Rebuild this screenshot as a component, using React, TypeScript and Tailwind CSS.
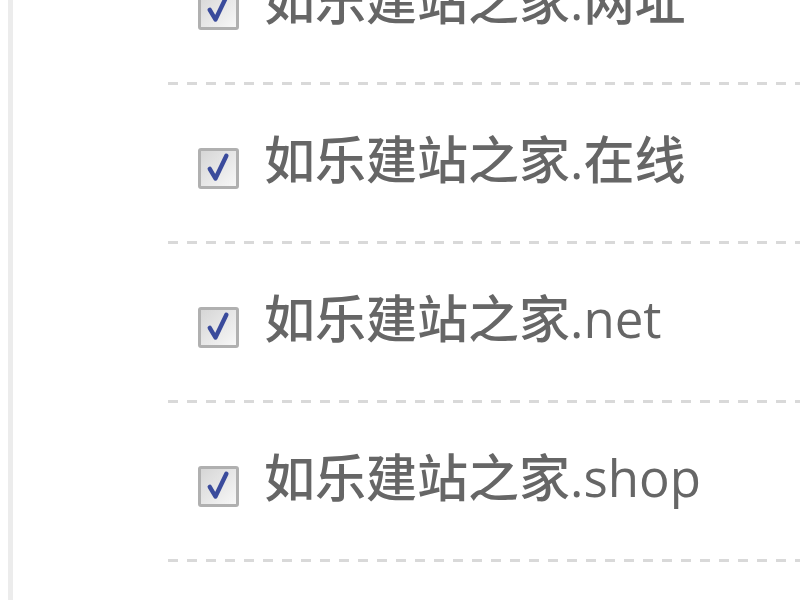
const domains = ['如乐建站之家.网址', '如乐建站之家.在线', '如乐建站之家.net', '如乐建站之家.shop']

const CheckMark = () => (
	<span className="mt-[10px] flex h-[41px] w-[41px] shrink-0 items-center justify-center rounded-[3px] border-[3px] border-[#b0b0b0] bg-[linear-gradient(135deg,#d6d6d6,#f7f7f7)]">
		<svg viewBox="0 0 40 40" className="h-[38px] w-[38px]">
			<path d="M10 21 L16.5 32 L29 6" fill="none" stroke="#3a4b9c" strokeWidth="5" strokeLinecap="round" strokeLinejoin="round" />
		</svg>
	</span>
)

export default function App() {
	return (
		<div className="flex h-[600px] w-[800px] overflow-hidden bg-white">
			<div className="ml-[8px] w-[5px] shrink-0 bg-[#ececec]" />
			<ul className="mt-[-74px] ml-[155px] flex-1">
				{domains.map(name => (
					<li key={name} className="flex flex-col">
						<div className="flex h-[156px] items-center gap-[25px] pl-[30px]">
							<CheckMark />
							<span className="mt-[-8px] text-[51px] font-medium leading-none text-[#666] [font-family:'Open_Sans','Noto_Sans_CJK_SC',sans-serif]">
								{name}
							</span>
						</div>
						<div className="h-[3px] bg-[repeating-linear-gradient(90deg,#d9d9d9_0_10px,transparent_10px_19px)]" />
					</li>
				))}
			</ul>
		</div>
	)
}
